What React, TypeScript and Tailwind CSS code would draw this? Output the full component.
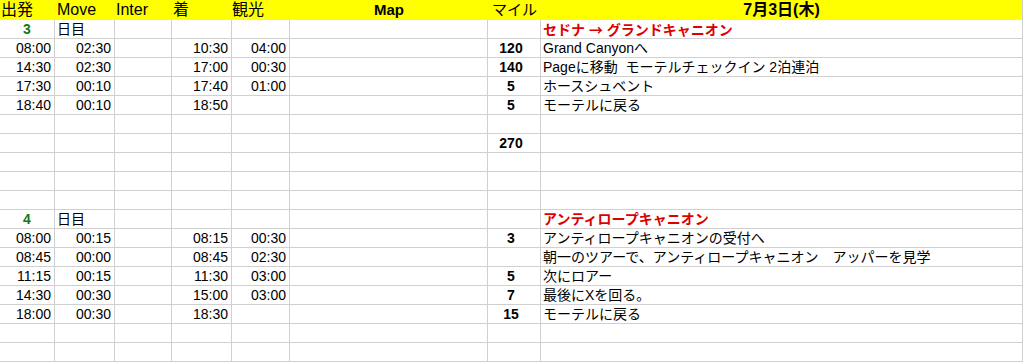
import React from "react";

type Row = {
  day?: string;
  dayLabel?: string;
  dep?: string;
  move?: string;
  arr?: string;
  sight?: string;
  mile?: string;
  note?: string;
  red?: React.ReactNode;
};

const rows: Row[] = [
  { day: "3", dayLabel: "日目", red: <>セドナ <span className="font-['Noto_Sans_CJK_JP']">→</span> グランドキャニオン</> },
  { dep: "08:00", move: "02:30", arr: "10:30", sight: "04:00", mile: "120", note: "Grand Canyonへ" },
  { dep: "14:30", move: "02:30", arr: "17:00", sight: "00:30", mile: "140", note: "Pageに移動\u00a0\u00a0モーテルチェックイン 2泊連泊" },
  { dep: "17:30", move: "00:10", arr: "17:40", sight: "01:00", mile: "5", note: "ホースシュベント" },
  { dep: "18:40", move: "00:10", arr: "18:50", mile: "5", note: "モーテルに戻る" },
  {},
  { mile: "270" },
  {},
  {},
  {},
  { day: "4", dayLabel: "日目", red: <>アンティロープキャニオン</> },
  { dep: "08:00", move: "00:15", arr: "08:15", sight: "00:30", mile: "3", note: "アンティロープキャニオンの受付へ" },
  { dep: "08:45", move: "00:00", arr: "08:45", sight: "02:30", note: "朝一のツアーで、アンティロープキャニオン　アッパーを見学" },
  { dep: "11:15", move: "00:15", arr: "11:30", sight: "03:00", mile: "5", note: "次にロアー" },
  { dep: "14:30", move: "00:30", arr: "15:00", sight: "03:00", mile: "7", note: "最後にXを回る。" },
  { dep: "18:00", move: "00:30", arr: "18:30", mile: "15", note: "モーテルに戻る" },
  {},
  {},
];

const cell = "h-[19px] border-r border-b border-[#d0d0d0] whitespace-nowrap overflow-visible leading-[18px] text-[14px]";
const right = cell + " text-right pr-[3px]";
const left = cell + " text-left pl-[2px]";
const head = "h-[20px] bg-[#ffff00] leading-[20px]";

export default function App() {
  return (
    <div className="w-[1024px] h-[362px] bg-white overflow-hidden font-['Liberation_Sans','Noto_Sans_CJK_JP',sans-serif] text-black">
      <div className="grid grid-cols-[55px_60px_57px_60px_58px_198px_53px_482px] w-[1023px]">
        {/* header */}
        <div className={head + " text-[16px] pl-[1px]"}>出発</div>
        <div className={head + " text-[16px] pl-[2px]"}>Move</div>
        <div className={head + " text-[16px] pl-[1px]"}>Inter</div>
        <div className={head + " text-[16px] pl-[1px]"}>着</div>
        <div className={head + " text-[16px] pl-[0px]"}>観光</div>
        <div className={head + " text-[15px] font-bold text-center"}>Map</div>
        <div className={head + " text-[15px] text-center"}>マイル</div>
        <div className={head + " text-[16px] font-bold text-center border-r border-[#d0d0d0]"}>7月3日(木)</div>

        {rows.map((r, i) => (
          <React.Fragment key={i}>
            {r.day ? (
              <div className={cell + " text-center font-bold text-[#137a13]"}>{r.day}</div>
            ) : (
              <div className={right}>{r.dep}</div>
            )}
            {r.dayLabel ? (
              <div className={left}>{r.dayLabel}</div>
            ) : (
              <div className={right}>{r.move}</div>
            )}
            <div className={cell}></div>
            <div className={right}>{r.arr}</div>
            <div className={right}>{r.sight}</div>
            <div className={cell}></div>
            <div className={cell + " text-center font-bold pr-[6px]"}>{r.mile}</div>
            {r.red ? (
              <div className={left + " font-bold text-[#dc0000]"}>{r.red}</div>
            ) : (
              <div className={left}>{r.note}</div>
            )}
          </React.Fragment>
        ))}
      </div>
    </div>
  );
}
